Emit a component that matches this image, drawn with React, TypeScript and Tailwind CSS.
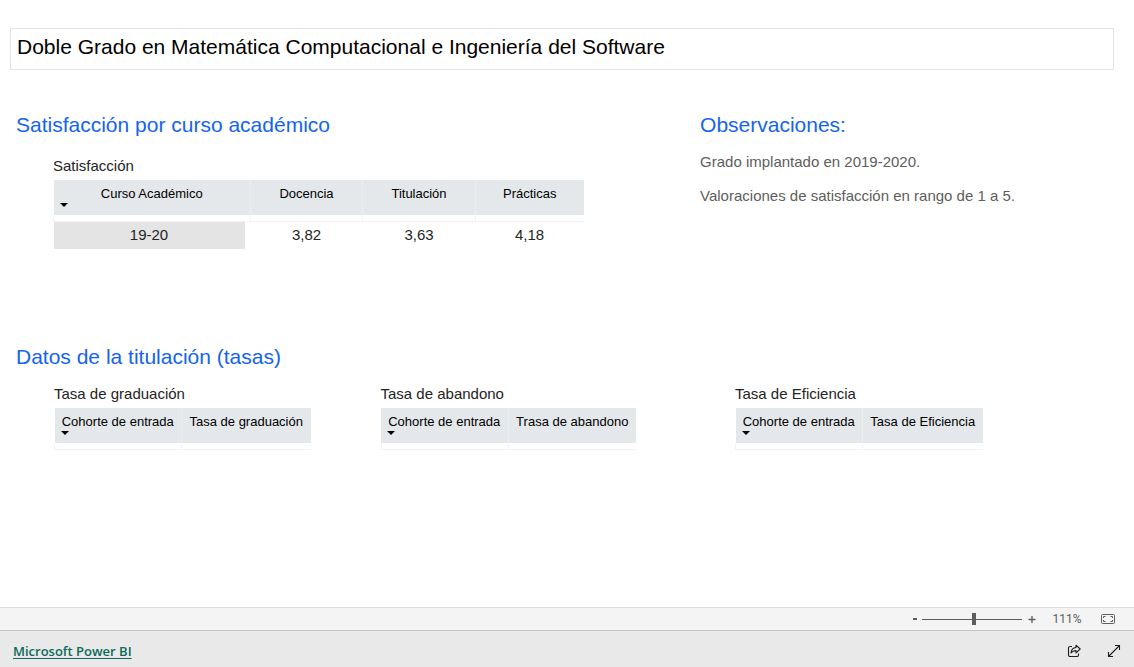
import { useState } from "react";

type Column = { label: string; width: string };

function SortArrow() {
  return (
    <svg className="mt-px h-1 w-2 self-start" viewBox="0 0 8 4" aria-hidden="true">
      <path d="M0 0h8L4 4z" fill="#000" />
    </svg>
  );
}

function DataTable({
  title,
  columns,
  rows = [],
}: {
  title: string;
  columns: Column[];
  rows?: string[][];
}) {
  return (
    <table className="table-fixed border-collapse text-center">
      <caption className="pb-1 text-left text-[15px] leading-5 text-[#252423]">{title}</caption>
      <colgroup>
        {columns.map((column) => (
          <col key={column.label} className={column.width} />
        ))}
      </colgroup>
      <thead>
        <tr className="h-[35px] bg-[#e4e8eb]">
          {columns.map((column, index) => (
            <th
              key={column.label}
              scope="col"
              className="border-l border-[#eceff1] px-1.5 pt-1.5 align-top text-[13px] leading-4 font-normal whitespace-nowrap text-black first:border-l-0"
            >
              <button type="button" className="flex w-full flex-col items-center">
                {column.label}
                {index === 0 && <SortArrow />}
              </button>
            </th>
          ))}
        </tr>
      </thead>
      <tbody>
        <tr className="h-1.5 border-b border-l border-[#f3f3f3]">
          {columns.map((column) => (
            <td key={column.label} className="border-l border-[#f3f3f3] p-0" />
          ))}
        </tr>
        {rows.map((row) => (
          <tr key={row[0]} className="text-[15px] leading-5 text-[#252423]">
            {row.map((value, index) =>
              index === 0 ? (
                <th key={value} scope="row" className="p-0 pr-1.5 font-normal">
                  <div className="bg-[#e4e4e4] pt-[3px] pb-1">{value}</div>
                </th>
              ) : (
                <td key={value} className="p-0 pb-px">
                  {value}
                </td>
              ),
            )}
          </tr>
        ))}
      </tbody>
    </table>
  );
}

function ZoomBar() {
  const [position, setPosition] = useState(52);
  return (
    <div className="flex h-6 items-center justify-end border-t border-b border-t-[#dedede] border-b-[#c4c4c4] bg-[#f4f4f4] pr-[19px] text-[#605e5c]">
      <button
        type="button"
        aria-label="Alejar"
        className="flex h-4 w-3.5 items-center justify-center"
        onClick={() => setPosition(Math.max(0, position - 5))}
      >
        <svg className="h-2 w-2" viewBox="0 0 8 8">
          <path d="M2 4h4" stroke="currentColor" strokeWidth="2" />
        </svg>
      </button>
      <input
        type="range"
        aria-label="Zoom"
        min={0}
        max={100}
        value={position}
        onChange={(event) => setPosition(Number(event.target.value))}
        className="h-3 w-[100px] appearance-none bg-transparent [&::-webkit-slider-runnable-track]:h-px [&::-webkit-slider-runnable-track]:bg-[#605e5c] [&::-webkit-slider-thumb]:-mt-1.5 [&::-webkit-slider-thumb]:h-3 [&::-webkit-slider-thumb]:w-1 [&::-webkit-slider-thumb]:appearance-none [&::-webkit-slider-thumb]:bg-[#605e5c]"
      />
      <button
        type="button"
        aria-label="Acercar"
        className="ml-1 flex h-4 w-3 items-center justify-center"
        onClick={() => setPosition(Math.min(100, position + 5))}
      >
        <svg className="h-2 w-2" viewBox="0 0 8 8">
          <path d="M.5 4.500h7M4 1v7" stroke="currentColor" strokeWidth="1.3" />
        </svg>
      </button>
      <span className="ml-[13px] w-8 text-center font-[Roboto,sans-serif] text-xs">111%</span>
      <button type="button" aria-label="Ajustar a la página" className="ml-[18px]">
        <svg className="h-2.5 w-3.5" viewBox="0 0 14 10" fill="none" stroke="currentColor">
          <rect x=".5" y=".5" width="13" height="9" rx="1" />
          <path d="M2.500 4V2.500h2M9.500 2.500h2V4M11.500 6v1.500h-2M4.500 7.500h-2V6" />
        </svg>
      </button>
    </div>
  );
}

function Footer() {
  return (
    <footer className="flex h-9 items-center justify-between bg-[#e9e9e9] pt-1 pr-[13px] pl-[13px]">
      <a
        href="#"
        className="font-['Open_Sans',sans-serif] text-[13px] leading-5 font-semibold text-[#0b6a5b] underline underline-offset-2"
      >
        Microsoft Power BI
      </a>
      <div className="flex items-center gap-[26px] text-[#201f1e]">
        <button type="button" aria-label="Compartir">
          <svg
            className="h-3.5 w-3.5"
            viewBox="0 0 14 14"
            fill="none"
            stroke="currentColor"
            strokeWidth="1.1"
            strokeLinejoin="round"
          >
            <path d="M5 2.500H3A1.500 1.500 0 0 0 1.500 4v7A1.500 1.500 0 0 0 3 12.500h7A1.500 1.500 0 0 0 11.500 11V9.500" />
            <path d="M9 1.200 13.200 5 9 8.800V6.600C6.800 6.500 5.300 7.200 4 9c.2-3 1.800-5.200 5-5.500z" />
          </svg>
        </button>
        <button type="button" aria-label="Pantalla completa">
          <svg
            className="h-3.5 w-3.5"
            viewBox="0 0 14 14"
            fill="none"
            stroke="currentColor"
            strokeWidth="1.1"
          >
            <path d="M1.500 12.500l11-11M8 1.500h4.500V6M1.500 8v4.500H6" />
          </svg>
        </button>
      </div>
    </footer>
  );
}

const satisfactionColumns: Column[] = [
  { label: "Curso Académico", width: "w-[197px]" },
  { label: "Docencia", width: "w-[112px]" },
  { label: "Titulación", width: "w-[113px]" },
  { label: "Prácticas", width: "w-[108px]" },
];

export default function App() {
  return (
    <div className="flex min-h-screen flex-col bg-white font-['Liberation_Sans',Arial,sans-serif] text-black">
      <main className="flex-1 pt-7 pr-5 pl-2.5">
        <h1 className="border border-[#e4e4e4] px-1.5 pt-1 pb-2 text-[21px] leading-7">
          Doble Grado en Matemática Computacional e Ingeniería del Software
        </h1>

        <div className="mt-[41px] grid grid-cols-[623fr_377fr] pl-1.5">
          <section className="h-[232px]">
            <h2 className="text-[21px] leading-7 text-[#1464ee]">Satisfacción por curso académico</h2>
            <div className="mt-[17px] pl-[37px]">
              <DataTable title="Satisfacción" columns={satisfactionColumns} rows={[["19-20", "3,82", "3,63", "4,18"]]} />
            </div>
          </section>
          <section>
            <h2 className="text-[21px] leading-7 text-[#1464ee]">Observaciones:</h2>
            <div className="mt-[13px] space-y-3.5 text-[15px] leading-5 text-[#605e5c]">
              <p>Grado implantado en 2019-2020.</p>
              <p>Valoraciones de satisfacción en rango de 1 a 5.</p>
            </div>
          </section>
        </div>

        <section className="pl-1.5">
          <h2 className="text-[21px] leading-7 text-[#1464ee]">Datos de la titulación (tasas)</h2>
          <div className="mt-[13px] flex items-start pl-[38px]">
            <DataTable
              title="Tasa de graduación"
              columns={[
                { label: "Cohorte de entrada", width: "w-[127px]" },
                { label: "Tasa de graduación", width: "w-[129px]" },
              ]}
            />
            <div className="ml-[70px]">
              <DataTable
                title="Tasa de abandono"
                columns={[
                  { label: "Cohorte de entrada", width: "w-[127px]" },
                  { label: "Trasa de abandono", width: "w-[128px]" },
                ]}
              />
            </div>
            <div className="ml-[99px]">
              <DataTable
                title="Tasa de Eficiencia"
                columns={[
                  { label: "Cohorte de entrada", width: "w-[127px]" },
                  { label: "Tasa de Eficiencia", width: "w-[120px]" },
                ]}
              />
            </div>
          </div>
        </section>
      </main>
      <ZoomBar />
      <Footer />
    </div>
  );
}
